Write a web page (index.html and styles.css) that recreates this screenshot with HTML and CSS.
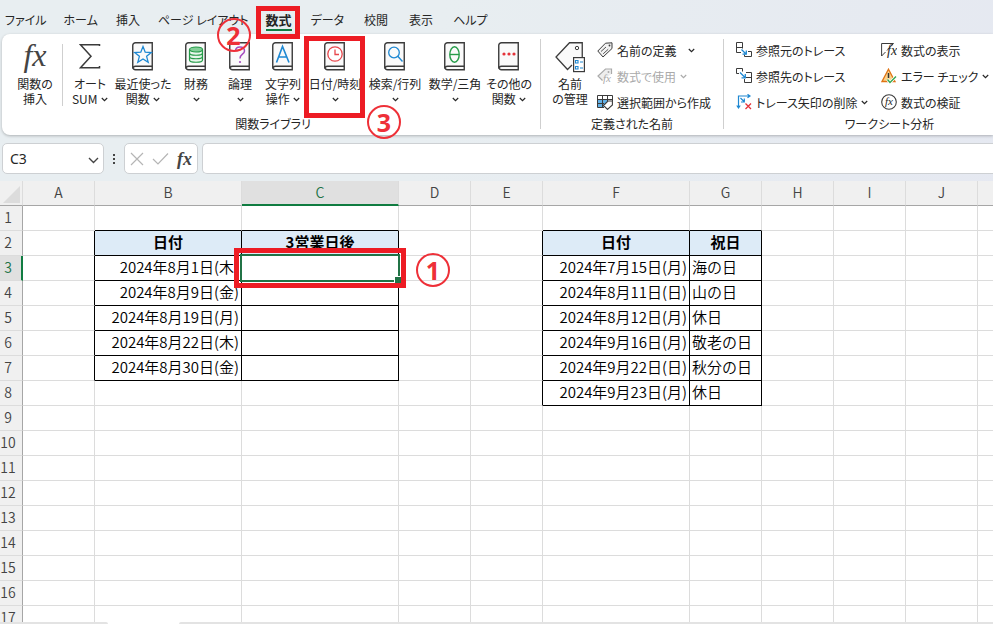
FILE: index.html
```html
<!DOCTYPE html>
<html lang="ja">
<head>
<meta charset="utf-8">
<title>数式</title>
<link rel="stylesheet" href="styles.css">
</head>
<body>
<svg class="defs" aria-hidden="true">
  <symbol id="book" viewBox="0 0 22 29"><path d="M3.5.75H20.25V27.75H3.5A2.75 2.75 0 0 1 .75 25V3.500A2.75 2.75 0 0 1 3.500.75Z" fill="#fafafa" stroke="#3b3b3b" stroke-width="1.400"/><path d="M.75 26.500Q1 24.250 3.500 24.250H20.250" fill="none" stroke="#3b3b3b" stroke-width="1.300"/></symbol>
  <symbol id="chev" viewBox="0 0 7 5"><path d="M.8 1L3.500 3.600L6.200 1" fill="none" stroke="currentColor" stroke-width="1.200"/></symbol>
</svg>

<nav class="tabs">
  <a href="#">ファイル</a>
  <a href="#">ホーム</a>
  <a href="#">挿入</a>
  <a href="#">ページ レイアウト</a>
  <a href="#" class="active">数式<span class="mark mark-tab"></span><span class="num num-2">2</span></a>
  <a href="#">データ</a>
  <a href="#">校閲</a>
  <a href="#">表示</a>
  <a href="#">ヘルプ</a>
</nav>

<main class="ribbon">
  <section class="group library">
    <div class="tools">
      <button class="big w46"><span class="fx-big">fx</span><span>関数の<br>挿入</span></button>
      <i class="rule"></i>
      <button class="big w44"><svg class="ico" viewBox="0 0 22 29"><path d="M20.500 4V2.750H1.500L12 14.250L1.500 25.750H20.500V24" fill="none" stroke="#3b3b3b" stroke-width="1.500"/></svg><span>オート<br>SUM <svg class="chev"><use href="#chev"/></svg></span></button>
      <button class="big w58"><svg class="ico" viewBox="0 0 22 29"><use href="#book"/><path d="M11 4.500L13.200 10.200L19.300 10.500L14.600 14.300L16.200 20.200L11 16.900L5.800 20.200L7.400 14.300L2.700 10.500L8.800 10.200Z" fill="none" stroke="#1e88d2" stroke-width="1.300"/></svg><span>最近使った<br>関数 <svg class="chev"><use href="#chev"/></svg></span></button>
      <button class="big w44"><svg class="ico" viewBox="0 0 22 29"><use href="#book"/><path d="M4.500 7.500V18C4.500 21 17.500 21 17.500 18V7.500" fill="#e7f6ea" stroke="#259b48" stroke-width="1.200"/><ellipse cx="11" cy="7.500" rx="6.500" ry="2.500" fill="#83cf98" stroke="#259b48" stroke-width="1.200"/><path d="M4.500 11C4.500 14 17.500 14 17.500 11M4.500 14.500C4.500 17.500 17.500 17.500 17.500 14.500" fill="none" stroke="#259b48" stroke-width="1.200"/></svg><span>財務<br><svg class="chev"><use href="#chev"/></svg></span></button>
      <button class="big w40"><svg class="ico" viewBox="0 0 22 29"><use href="#book"/><path d="M6.500 9C6.500 3.500 15.500 3.500 15.500 9C15.500 12.500 11 12 11 16.500" fill="none" stroke="#a54bc0" stroke-width="1.500"/><circle cx="11" cy="20" r="1.100" fill="#a54bc0"/></svg><span>論理<br><svg class="chev"><use href="#chev"/></svg></span></button>
      <button class="big w42"><svg class="ico" viewBox="0 0 22 29"><use href="#book"/><path d="M4.500 20.500L10.500 4.500L17 20.500M6.500 15H15" fill="none" stroke="#1e88d2" stroke-width="1.600"/></svg><span>文字列<br>操作 <svg class="chev"><use href="#chev"/></svg></span></button>
      <button class="big w58 marked"><svg class="ico" viewBox="0 0 22 29"><use href="#book"/><circle cx="11" cy="12" r="7.200" fill="#fff" stroke="#e8474c" stroke-width="1.300"/><path d="M11 7.500V12.500H15" fill="none" stroke="#e8474c" stroke-width="1.300"/></svg><span>日付/時刻<br><svg class="chev"><use href="#chev"/></svg></span><span class="mark mark-button"></span><span class="num num-3">3</span></button>
      <button class="big w58"><svg class="ico" viewBox="0 0 22 29"><use href="#book"/><circle cx="10" cy="10.500" r="5.300" fill="none" stroke="#1e88d2" stroke-width="1.300"/><path d="M13.800 14.300L18.500 19.500" stroke="#1e88d2" stroke-width="1.400"/></svg><span>検索/行列<br><svg class="chev"><use href="#chev"/></svg></span></button>
      <button class="big w58"><svg class="ico" viewBox="0 0 22 29"><use href="#book"/><ellipse cx="10.500" cy="12.500" rx="4.700" ry="7.700" fill="none" stroke="#259b48" stroke-width="1.400"/><path d="M6 12.500H15" stroke="#259b48" stroke-width="1.400"/></svg><span>数学/三角<br><svg class="chev"><use href="#chev"/></svg></span></button>
      <button class="big w46"><svg class="ico" viewBox="0 0 22 29"><use href="#book"/><g fill="#e5333a"><circle cx="6" cy="12" r="1.600"/><circle cx="11" cy="12" r="1.600"/><circle cx="16" cy="12" r="1.600"/></g></svg><span>その他の<br>関数 <svg class="chev"><use href="#chev"/></svg></span></button>
    </div>
    <h2>関数ライブラリ</h2>
  </section>

  <section class="group names">
    <div class="tools">
      <button class="big w36"><svg class="ico wide" viewBox="0 0 30 31"><path d="M17 23L12.500 27.500L1 15L14.500.75H27.250V15" fill="#fafafa" stroke="#3b3b3b" stroke-width="1.300"/><circle cx="22" cy="6" r="1.700" fill="none" stroke="#3b3b3b"/><rect x="18.600" y="15.600" width="10.800" height="14" fill="#fff" stroke="#3b3b3b" stroke-width="1.200"/><path d="M20.500 18.500h2.500v2.500h-2.500zM20.500 24.500h2.500v2.500h-2.500zM25 20h3M25 26h3" fill="none" stroke="#1e88d2" stroke-width="1.100"/></svg><span>名前<br>の管理</span></button>
      <div class="stack">
        <button class="small"><svg class="sico" viewBox="0 0 16 16"><path d="M.8 9L8.500 1.200L15 .8V6.500L6 15Z" fill="#f2f2f2" stroke="#3b3b3b" stroke-linejoin="round"/><path d="M4 9.500L9 5M6.200 11.800L11.200 7.300" stroke="#555"/><circle cx="12.500" cy="3.500" r=".9" fill="#3b3b3b"/></svg>名前の定義<svg class="chev far"><use href="#chev"/></svg></button>
        <button class="small" disabled><svg class="sico" viewBox="0 0 16 16"><path d="M5.500 12.500L1 8L8.500 1H14.500V6" fill="#eee" stroke="#aaa" stroke-width="1.200"/><circle cx="11.500" cy="4" r="1" fill="#aaa"/><text x="6" y="14" class="fx-small">fx</text></svg>数式で使用<svg class="chev near"><use href="#chev"/></svg></button>
        <button class="small"><svg class="sico" viewBox="0 0 16 16"><path d="M1 6H10V8L7 11V13H1Z" fill="#62b0e6"/><path d="M.5 1.500H15.500V7M.5 1.500V13.500H7M.5 5.500H15.500M5.500 1.500V13.500M10.500 1.500V7M.5 9.500H7" fill="none" stroke="#3b3b3b"/><path d="M6.500 11.500L11 7H15.400V11L10.500 15.400Z" fill="#fff" stroke="#3b3b3b" stroke-width="1.100"/></svg>選択範囲から作成</button>
      </div>
    </div>
    <h2>定義された名前</h2>
  </section>

  <section class="group audit">
    <div class="tools">
      <div class="stack first">
        <button class="small"><svg class="sico" viewBox="0 0 16 16"><path d="M6.500 6.500V.5H.5V10.500H5M.5 5.500H6.500M12 9.500H15.500V14.500H8.500V12.500" fill="none" stroke="#3b3b3b"/><path d="M5.500 7.500L10 12M10.300 8.500V12.200H6.500" fill="none" stroke="#1e88d2" stroke-width="1.300"/></svg>参照元のトレース</button>
        <button class="small"><svg class="sico" viewBox="0 0 16 16"><path d="M3 5.500H.5V.5H6.500V3.500M10 4.500H15.500V14.500H8.500V11M10 9.500H15.500" fill="none" stroke="#3b3b3b"/><path d="M4 4.500L9 9.500M9.300 6V9.800H5.500" fill="none" stroke="#1e88d2" stroke-width="1.300"/></svg>参照先のトレース</button>
        <button class="small"><svg class="sico" viewBox="0 0 16 16"><path d="M2.500 14V2H14M.8 11.500L2.500 14L4.200 11.500M11.500.3L14 2L11.500 3.800M4.500 4L8 7.500M8.300 4.500V8H5" fill="none" stroke="#1e88d2" stroke-width="1.200"/><path d="M9.500 9.500L15 15M15 9.500L9.500 15" stroke="#e5333a" stroke-width="1.300"/></svg>トレース矢印の削除<svg class="chev near"><use href="#chev"/></svg></button>
      </div>
      <div class="stack">
        <button class="small"><svg class="sico" viewBox="0 0 16 16"><path d="M4.500 10L.6 14V1.500H12.500L6 8.500" fill="none" stroke="#3b3b3b"/><text x="6" y="13" class="fx-show">fx</text></svg>数式の表示</button>
        <button class="small"><svg class="sico" viewBox="0 0 16 16"><path d="M7.500 1.200L14 13.500H1Z" fill="#fbd28c" stroke="#df7414" stroke-width="1.300"/><path d="M7.500 5V10" stroke="#333" stroke-width="1.500"/><path d="M6.500 11.500L9 14.500L15 8.500" fill="none" stroke="#fff" stroke-width="3"/><path d="M6.500 11.500L9 14.500L15 8.500" fill="none" stroke="#35a853" stroke-width="1.400"/></svg>エラー チェック<svg class="chev near"><use href="#chev"/></svg></button>
        <button class="small"><svg class="sico" viewBox="0 0 16 16"><circle cx="8" cy="8" r="7.300" fill="#fff" stroke="#3b3b3b" stroke-width="1.100"/><text x="4" y="11" class="fx-small">fx</text></svg>数式の検証</button>
      </div>
    </div>
    <h2>ワークシート分析</h2>
  </section>
</main>

<div class="formula-bar">
  <div class="name-box"><input type="text" value="C3" aria-label="名前ボックス"><button aria-label="一覧"><svg width="11" height="7" viewBox="0 0 11 7"><path d="M1 1L5.500 5.500L10 1" fill="none" stroke="#444" stroke-width="1.400"/></svg></button></div>
  <svg class="dots" width="4" height="12" viewBox="0 0 4 12"><path d="M1 2h2M1 6h2M1 10h2" stroke="#444" stroke-width="2"/></svg>
  <div class="edit-box">
    <button aria-label="キャンセル"><svg width="14" height="14" viewBox="0 0 14 14"><path d="M1 1L13 13M13 1L1 13" stroke="#b5b5b5" stroke-width="1.200"/></svg></button>
    <button aria-label="入力"><svg width="17" height="14" viewBox="0 0 17 14"><path d="M1 7L6 12L16 1.500" fill="none" stroke="#b5b5b5" stroke-width="1.200"/></svg></button>
    <button class="fx-mid">fx</button>
  </div>
  <input class="formula" type="text" aria-label="数式バー">
</div>

<div class="sheet">
<table>
  <colgroup><col class="c-row"><col class="c-std"><col class="c-date"><col class="c-due"><col class="c-std"><col class="c-std"><col class="c-date"><col class="c-std"><col class="c-std"><col class="c-std"><col class="c-std"><col></colgroup>
  <thead><tr><th class="corner"><svg width="17" height="17" viewBox="0 0 17 17"><path d="M17 0V17H0Z" fill="#dcdcdc"/></svg></th><th>A</th><th>B</th><th class="on">C</th><th>D</th><th>E</th><th>F</th><th>G</th><th>H</th><th>I</th><th>J</th><th></th></tr></thead>
  <tbody>
  <tr><th>1</th><td></td><td class="u"></td><td class="u"></td><td></td><td></td><td class="u"></td><td class="u"></td><td></td><td></td><td></td><td></td></tr>
  <tr class="title"><th>2</th><td></td><td class="b">日付</td><td class="b">3営業日後</td><td></td><td></td><td class="b">日付</td><td class="b">祝日</td><td></td><td></td><td></td><td></td></tr>
  <tr><th class="on">3</th><td></td><td class="b date">2024年8月1日(木)</td><td class="b current"><span class="selection"></span><span class="mark mark-cell"></span><span class="num num-1">1</span></td><td></td><td></td><td class="b date">2024年7月15日(月)</td><td class="b">海の日</td><td></td><td></td><td></td><td></td></tr>
  <tr><th>4</th><td></td><td class="b date">2024年8月9日(金)</td><td class="b"></td><td></td><td></td><td class="b date">2024年8月11日(日)</td><td class="b">山の日</td><td></td><td></td><td></td><td></td></tr>
  <tr><th>5</th><td></td><td class="b date">2024年8月19日(月)</td><td class="b"></td><td></td><td></td><td class="b date">2024年8月12日(月)</td><td class="b">休日</td><td></td><td></td><td></td><td></td></tr>
  <tr><th>6</th><td></td><td class="b date">2024年8月22日(木)</td><td class="b"></td><td></td><td></td><td class="b date">2024年9月16日(月)</td><td class="b">敬老の日</td><td></td><td></td><td></td><td></td></tr>
  <tr><th>7</th><td></td><td class="b date">2024年8月30日(金)</td><td class="b"></td><td></td><td></td><td class="b date">2024年9月22日(日)</td><td class="b">秋分の日</td><td></td><td></td><td></td><td></td></tr>
  <tr><th>8</th><td></td><td></td><td></td><td></td><td></td><td class="b date">2024年9月23日(月)</td><td class="b">休日</td><td></td><td></td><td></td><td></td></tr>
  <tr><th>9</th><td></td><td></td><td></td><td></td><td></td><td></td><td></td><td></td><td></td><td></td><td></td></tr>
  <tr><th>10</th><td></td><td></td><td></td><td></td><td></td><td></td><td></td><td></td><td></td><td></td><td></td></tr>
  <tr><th>11</th><td></td><td></td><td></td><td></td><td></td><td></td><td></td><td></td><td></td><td></td><td></td></tr>
  <tr><th>12</th><td></td><td></td><td></td><td></td><td></td><td></td><td></td><td></td><td></td><td></td><td></td></tr>
  <tr><th>13</th><td></td><td></td><td></td><td></td><td></td><td></td><td></td><td></td><td></td><td></td><td></td></tr>
  <tr><th>14</th><td></td><td></td><td></td><td></td><td></td><td></td><td></td><td></td><td></td><td></td><td></td></tr>
  <tr><th>15</th><td></td><td></td><td></td><td></td><td></td><td></td><td></td><td></td><td></td><td></td><td></td></tr>
  <tr><th>16</th><td></td><td></td><td></td><td></td><td></td><td></td><td></td><td></td><td></td><td></td><td></td></tr>
  <tr><th>17</th><td></td><td></td><td></td><td></td><td></td><td></td><td></td><td></td><td></td><td></td><td></td></tr>
  </tbody>
</table>
</div>
<footer class="sheet-tabs"><i></i><b></b><i></i></footer>
</body>
</html>
```
FILE: styles.css
```css
* { box-sizing: border-box; }
body {
  margin: 0;
  height: 100vh;
  display: flex;
  flex-direction: column;
  overflow: hidden;
  background: linear-gradient(100deg, #e8eef1 40%, #e5e8f1);
  color: #262626;
  font: 12px/15px "Noto Sans CJK JP", "Noto Sans", sans-serif;
}
button, input { font: inherit; color: inherit; border: 0; padding: 0; background: none; }
.defs { position: absolute; width: 0; height: 0; }

.tabs {
  flex: none;
  display: flex;
  gap: 17px;
  height: 34px;
  padding: 10px 5px 0;
  line-height: 20px;
  font-feature-settings: "palt";
}
.tabs a { min-width: 26px; height: 21px; color: inherit; text-align: center; text-decoration: none; white-space: nowrap; }
.tabs .active { position: relative; font-size: 13px; font-weight: 700; border-bottom: 2px solid #107c41; }
.tabs .active ~ a { margin-left: 2px; }

.ribbon {
  flex: none;
  display: flex;
  margin-left: 2px;
  padding-top: 5px;
  height: 101px;
  background: #fff;
  border-radius: 8px 0 0 8px;
  box-shadow: 0 1px 3px rgba(0, 0, 0, .25);
  font-feature-settings: "palt";
}
.group { flex: none; display: flex; flex-direction: column; height: 90px; border-right: 1px solid #cfcfcf; }
.group h2 { margin: auto 0 -2px; font-size: 12px; line-height: 15px; font-weight: 400; text-align: center; }
.tools { display: flex; height: 74px; padding-top: 3px; }
.library { width: 539px; }
.library .tools { padding-left: 10px; gap: 2px; }
.library h2 { padding-left: 4px; }
.rule { width: 1px; height: 62px; margin: 2px 3px 0 2px; background: #cfcfcf; }
.names { width: 183px; }
.names .tools { padding-left: 11px; gap: 9px; }
.audit { flex: 1 1 0; min-width: 0; border: 0; }
.audit .tools { padding-left: 12px; gap: 11px; }
.audit h2 { padding-left: 62px; }
.big { position: relative; display: flex; flex-direction: column; align-items: center; gap: 5px; height: 66px; white-space: nowrap; }
.big > span { display: block; flex: none; }
.w36 { width: 36px; } .w40 { width: 40px; } .w42 { width: 42px; } .w44 { width: 44px; }
.w46 { width: 46px; } .w58 { width: 58px; }
.big .ico { width: 22px; height: 29px; flex: none; }
.big .wide { width: 30px; height: 31px; margin-bottom: -2px; }
.fx-big { height: 29px; color: #444; font: italic 32px/26px "Liberation Serif", serif; }
.fx-small { font: italic 11px "Liberation Serif", serif; fill: currentColor; }
.fx-show { font: italic 14px "Liberation Serif", serif; fill: currentColor; }
.chev { width: 7px; height: 5px; margin-left: 1px; vertical-align: 2px; }
.stack { display: flex; flex-direction: column; align-items: flex-start; margin-top: -5px; }
.first { width: 134px; }
.small { display: flex; flex: none; align-items: center; gap: 4px; height: 26px; white-space: nowrap; }
.small:disabled { color: #aaa; }
.sico { width: 16px; height: 16px; flex: none; }
.small .far { margin-left: 7px; }
.small .near { margin-left: 0; }

.formula-bar { flex: none; display: flex; align-items: center; height: 46px; padding: 1px 0 0 2px; }
.name-box, .edit-box, .formula { height: 31px; background: #fff; border: 1px solid #cdd0d3; border-radius: 5px; }
.name-box { display: flex; width: 102px; padding: 0 4px 0 7px; }
.name-box input { flex: 1; min-width: 0; outline: 0; font: 14px "Noto Sans", sans-serif; }
.dots { margin: 0 8px; }
.edit-box { display: flex; align-items: center; gap: 8px; width: 74px; padding-left: 5px; }
.edit-box button { display: flex; }
.edit-box .fx-mid { font: italic bold 18px/20px "Liberation Serif", serif; color: #444; }
.formula { flex: 1; min-width: 0; margin-left: 4px; border-right: 0; border-radius: 5px 0 0 5px; }

.sheet { flex: 1; min-height: 0; overflow: hidden; background: #fff; }
table { width: 100%; table-layout: fixed; border-spacing: 0; }
.c-row { width: 23px; } .c-std { width: 72px; } .c-date { width: 147px; } .c-due { width: 157px; }
th, td { height: 25px; padding: 0 0 2px; border: solid #dcdcdc; border-width: 0 1px 1px 0; white-space: nowrap; }
th { background: #f0f0f0; color: #444; font: 350 14px/20px "Noto Sans CJK JP", sans-serif; }
thead th { border-bottom-color: #a6a6a6; }
thead th:last-child, td:last-child { border-right: 0; }
tbody th { padding-right: 6px; border-right-color: #a6a6a6; }
.corner svg { display: block; margin: 4px 0 0 3px; }
th.on { background: #e0e0e0; color: #217346; }
thead th.on { border-bottom: 2px solid #107c41; }
tbody th.on { padding-right: 5px; border-right: 2px solid #107c41; }
td { padding-left: 2px; font-size: 15px; font-weight: 350; line-height: 20px; color: #000; }
.u { border-bottom-color: #000; }
.b { border-color: #000; }
td:has(+ .b) { border-right-color: #000; }
.title .b { padding-left: 0; background: #ddebf7; text-align: center; font-weight: 700; }
.date { padding: 0 2px 2px 0; text-align: right; }
.current { position: relative; }
.selection { position: absolute; inset: -2px; border: 2px solid #217346; }
.selection::after { content: ""; position: absolute; right: -3px; bottom: -3px; width: 6px; height: 6px; background: #217346; border: solid #fff; border-width: 1px 0 0 1px; }

.mark { position: absolute; border: 5px solid #ed1c24; }
.mark-tab { inset: -4px -8px -10px -10px; }
.mark-button { inset: -6px -1px auto -2px; height: 82px; }
.mark-cell { inset: -8px; }
.num {
  position: absolute;
  z-index: 1;
  width: 34px;
  height: 34px;
  border: 2px solid #ee3038;
  border-radius: 50%;
  color: #ee3038;
  font: bold 25px/30px "Open Sans", sans-serif;
  text-align: center;
}
.num-1 { left: 174px; top: -3px; }
.num-2 { left: -49px; top: 8px; }
.num-3 { left: 61px; top: 63px; }

.sheet-tabs { flex: none; display: flex; height: 2px; background: #fff; }
.sheet-tabs i { width: 108px; background: #e3e3e3; border-radius: 0 3px 0 0; }
.sheet-tabs b { width: 71px; }
.sheet-tabs i:last-child { flex: 1; border-radius: 3px 0 0 0; }
```
